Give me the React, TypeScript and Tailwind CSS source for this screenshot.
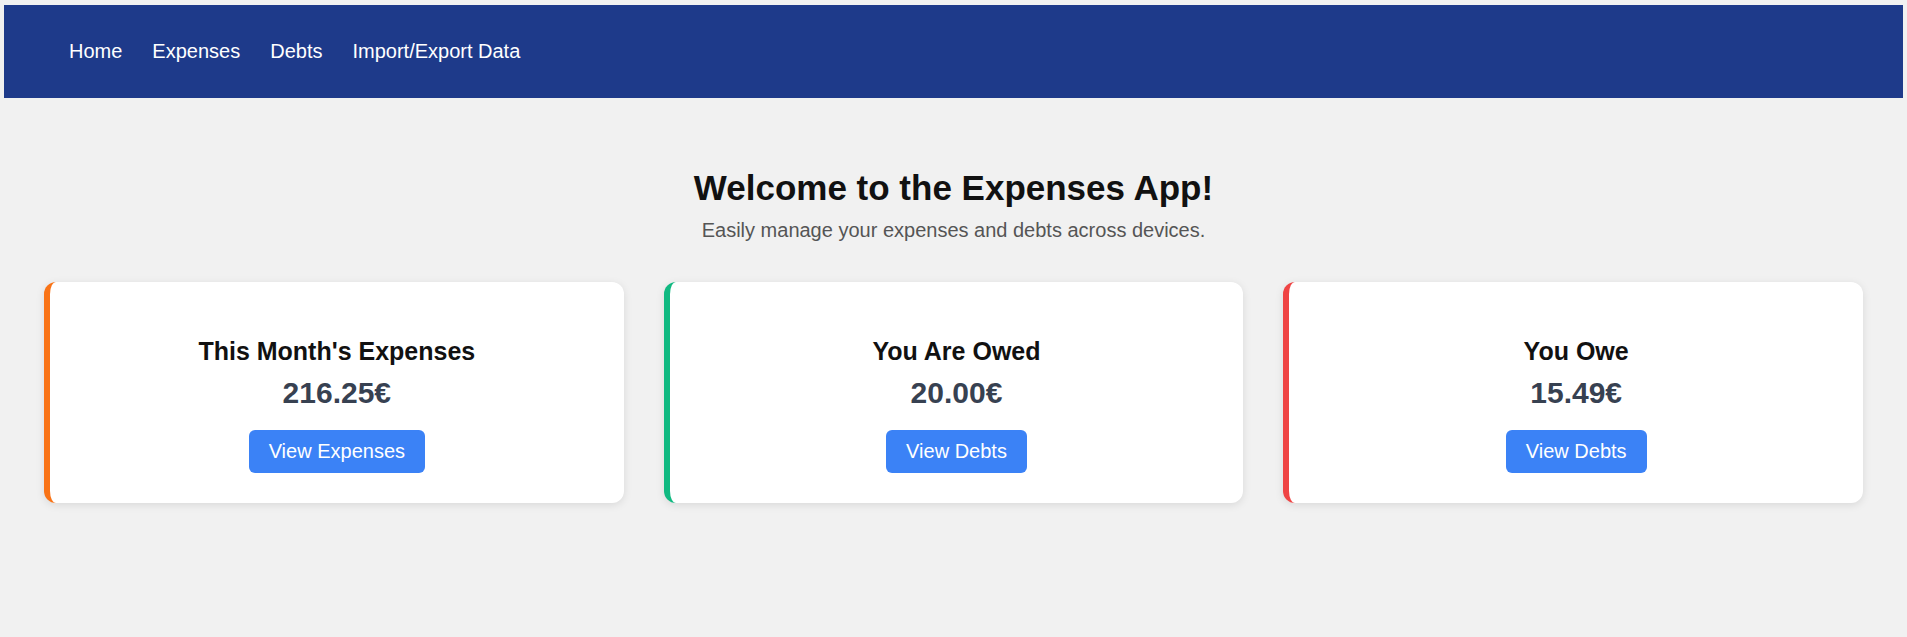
const links = ['Home', 'Expenses', 'Debts', 'Import/Export Data'];

const cards = [
  { title: "This Month's Expenses", amount: '216.25€', action: 'View Expenses', border: 'border-[#f97316]' },
  { title: 'You Are Owed', amount: '20.00€', action: 'View Debts', border: 'border-[#10b981]' },
  { title: 'You Owe', amount: '15.49€', action: 'View Debts', border: 'border-[#ef4444]' },
];

export default function App() {
  return (
    <div className="min-h-[637px] bg-[#f1f1f1] pt-[5px] font-['Liberation_Sans',Arial,sans-serif]">
      {/* nav */}
      <nav className="mx-[4px] flex h-[93px] items-center gap-[30px] bg-[#1e3a8a] pl-[65px]">
        {links.map((l) => (
          <a key={l} href="#" className="text-[20px] leading-[23px] text-white">
            {l}
          </a>
        ))}
      </nav>

      <main className="pt-[70px] text-center">
        <h1 className="text-[35px] leading-[40px] font-bold text-[#111111]">
          Welcome to the Expenses App!
        </h1>
        <p className="mt-[10px] text-[20px] leading-[24px] text-[#555555]">
          Easily manage your expenses and debts across devices.
        </p>

        {/* summary cards */}
        <div className="mt-[40px] grid grid-cols-3 gap-[40px] px-[44px]">
          {cards.map((c) => (
            <div
              key={c.title}
              className={`flex flex-col items-center rounded-xl border-l-[6px] ${c.border} bg-white pt-[55px] pb-[30px] shadow-[0_2px_8px_rgba(0,0,0,0.1)]`}
            >
              <h2 className="text-[25px] leading-[29px] font-bold text-[#111111]">{c.title}</h2>
              <div className="mt-[9px] text-[30px] leading-[35px] font-bold text-[#374151]">{c.amount}</div>
              <button className="mt-[20px] h-[43px] rounded-md bg-[#3b82f6] px-5 text-[20px] leading-[23px] text-white">
                {c.action}
              </button>
            </div>
          ))}
        </div>
      </main>
    </div>
  );
}
